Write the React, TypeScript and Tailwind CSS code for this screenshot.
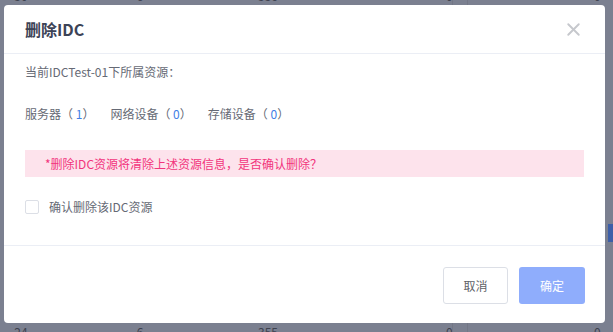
import { X } from "lucide-react";

const rows = [
  ["30", "6", "536", "0", "0"],
  ["12", "3", "218", "0", "0"],
  ["8", "2", "96", "0", "0"],
  ["15", "4", "301", "0", "0"],
  ["21", "5", "412", "0", "0"],
  ["9", "1", "88", "0", "0"],
  ["17", "3", "240", "0", "0"],
  ["24", "6", "355", "0", "0"],
];

function BackgroundTable() {
  return (
    <div className="-mt-[28px] flex flex-col text-[12px] text-[#3e424f]">
      {rows.map((r, i) => (
        <div
          key={i}
          className="grid h-[48px] grid-cols-[42px_196px_60px_154px_16px_1fr] items-center"
        >
          <span className="text-center">{r[0]}</span>
          <span className="text-center">{r[1]}</span>
          <span className="text-center">{r[2]}</span>
          <span className="pl-[148px] text-left">{r[3]}</span>
          <span className="h-full border-x border-[#737786]" />
          <span className="pl-[126px]">{r[4]}</span>
        </div>
      ))}
    </div>
  );
}

function Checkbox() {
  return (
    <span className="inline-block h-[14px] w-[14px] rounded-[2px] border border-[#dcdfe6] bg-white" />
  );
}

export default function App() {
  return (
    <div
      className="relative h-[332px] w-[613px] overflow-hidden bg-[#7b8090]"
      style={{ fontFamily: '"Noto Sans CJK SC", "Noto Sans", sans-serif' }}
    >
      <BackgroundTable />
      <div className="absolute right-0 top-[224px] h-[18px] w-[5px] bg-[#3d5fa8]" />

      <div className="absolute left-[4px] top-[5px] flex h-[318px] w-[601px] flex-col rounded-[4px] bg-white">
        <div className="flex h-[49px] items-center justify-between border-b border-[#ebeef5] pl-[21px] pr-[21px]">
          <h2 className="text-[16px] font-bold text-[#3c4356]">删除IDC</h2>
          <X className="h-[21px] w-[21px] text-[#c6c8cd]" strokeWidth={2.2} />
        </div>

        <div className="flex h-[192px] flex-col border-b border-[#ebeef5] px-[21px] pt-[9px] text-[12px] text-[#666a75]">
          <p className="h-[18px] leading-[18px]">当前IDCTest-01下所属资源：</p>
          <div className="mt-[24px] flex h-[18px] items-center gap-[16px] leading-[18px]">
            <span>
              服务器（ <span className="text-[#3f7ee6]">1</span>）
            </span>
            <span>
              网络设备（ <span className="text-[#3f7ee6]">0</span>）
            </span>
            <span>
              存储设备（ <span className="text-[#3f7ee6]">0</span>）
            </span>
          </div>
          <div className="mt-[27px] flex h-[27px] items-center bg-[#fde3ec] pl-[20px] text-[#f2357c]">
            *删除IDC资源将清除上述资源信息，是否确认删除？
          </div>
          <label className="mt-[21px] flex h-[18px] items-center gap-[10px] leading-[18px]">
            <Checkbox />
            <span>确认删除该IDC资源</span>
          </label>
        </div>

        <div className="flex flex-1 items-start justify-end gap-[11px] pr-[20px] pt-[21px] text-[12px]">
          <button className="h-[37px] w-[65px] rounded-[3px] border border-[#dcdfe6] bg-white text-[#606266]">
            取消
          </button>
          <button className="h-[37px] w-[66px] rounded-[3px] bg-[#8fadfc] text-white">
            确定
          </button>
        </div>
      </div>
    </div>
  );
}
